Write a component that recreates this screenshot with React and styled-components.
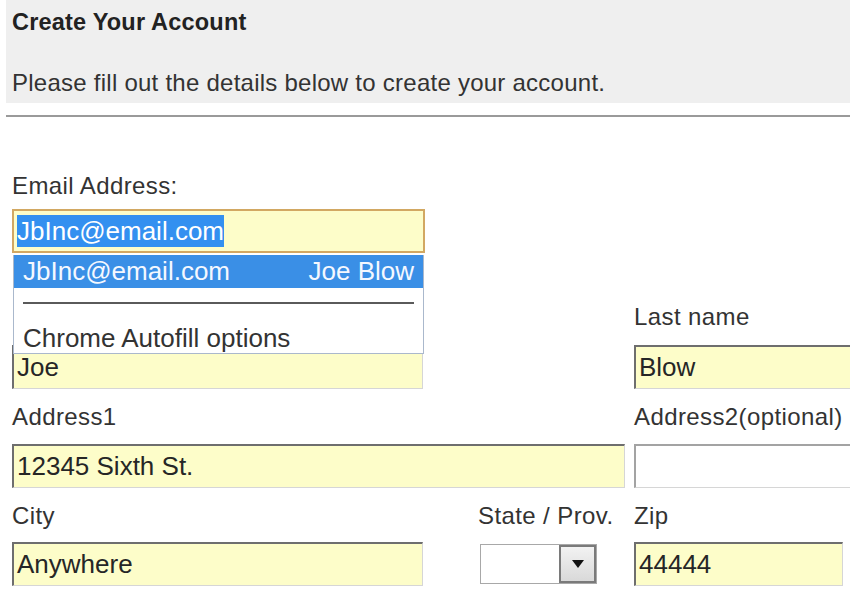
import React from 'react';
import styled, { createGlobalStyle } from 'styled-components';

const GlobalStyle = createGlobalStyle`
  html, body {
    margin: 0;
    padding: 0;
    background: #fff;
    overflow: hidden;
  }
  body {
    font-family: "Liberation Sans", Arial, sans-serif;
    color: #2b2b2b;
  }
`;

const Page = styled.div`
  width: 900px;
  padding-left: 6px;
`;

const Header = styled.div`
  background: #efefef;
  padding: 8px 6px 6px;
`;

const Title = styled.h1`
  margin: 0;
  font-size: 23.5px;
  line-height: 28px;
  font-weight: bold;
  letter-spacing: 0.2px;
  color: #222;
`;

const Subtitle = styled.p`
  margin: 33px 0 0;
  font-size: 24px;
  line-height: 28px;
  letter-spacing: 0.25px;
  color: #333;
`;

const Divider = styled.div`
  margin-top: 12px;
  height: 2px;
  background: #9a9a9a;
`;

const Form = styled.div`
  display: grid;
  grid-template-columns: 411px 211px 1fr;
  row-gap: 14px;
  padding: 55px 0 0 6px;
`;

const Field = styled.div`
  position: relative;
  display: flex;
  flex-direction: column;
  align-items: flex-start;
  grid-column: ${p => p.$span || 'auto'};
  padding-left: ${p => p.$indent || 0}px;
  margin-bottom: ${p => p.$after || 0}px;
`;

const Label = styled.label`
  font-size: 24px;
  line-height: 28px;
  letter-spacing: 0.4px;
  color: #333;
  margin-bottom: ${p => p.$gap || 13}px;
  white-space: nowrap;
  visibility: ${p => (p.$covered ? 'hidden' : 'visible')};
`;

const Input = styled.div`
  box-sizing: border-box;
  width: ${p => p.$width}px;
  height: 44px;
  display: flex;
  align-items: center;
  padding-left: 3px;
  font-size: 26px;
  color: #262626;
  white-space: nowrap;
  background: ${p => (p.$filled ? '#fdfdc9' : '#fff')};
  border-top: 2px solid ${p => (p.$filled ? '#6e6e6e' : '#a3a3a3')};
  border-left: 2px solid ${p => (p.$filled ? '#6e6e6e' : '#a3a3a3')};
  border-right: 1px solid #d6d6d6;
  border-bottom: 1px solid #d6d6d6;
`;

const FocusedInput = styled.div`
  box-sizing: border-box;
  width: 413px;
  height: 44px;
  display: flex;
  align-items: center;
  padding-left: 3px;
  font-size: 26px;
  background: #fdfdc9;
  border: 2px solid #d2a862;
`;

const Selected = styled.span`
  background: #3390f0;
  color: #fff;
  line-height: 32px;
`;

const Suggestions = styled.div`
  position: absolute;
  top: 83px;
  left: 1px;
  z-index: 2;
  box-sizing: border-box;
  width: 411px;
  background: #fff;
  border: 1px solid #aab8cc;
  border-top: none;
  font-size: 26px;
`;

const Suggestion = styled.div`
  display: flex;
  justify-content: space-between;
  height: 33px;
  align-items: center;
  padding: 0 9px;
  background: #3a8fe6;
  color: #f4f8ff;
`;

const Separator = styled.div`
  margin: 14px 9px 0;
  height: 2px;
  background: #5a5a5a;
`;

const Option = styled.div`
  padding: 20px 9px 0;
  line-height: 29px;
  color: #333;
`;

const Select = styled.div`
  box-sizing: border-box;
  margin: 2px 0 0 2px;
  width: 117px;
  height: 40px;
  display: flex;
  justify-content: flex-end;
  background: #fff;
  border: 1px solid #a8a8a8;
`;

const SelectButton = styled.div`
  box-sizing: border-box;
  width: 37px;
  height: 100%;
  display: flex;
  align-items: center;
  justify-content: center;
  background: linear-gradient(#f2f2f2, #d9d9d9);
  border: 2px solid #7a7a7a;
`;

const Arrow = () => (
  <svg width="12" height="8" viewBox="0 0 12 8">
    <path d="M0 0h12L6 8z" fill="#111" />
  </svg>
);

export default function App() {
  return (
    <Page>
      <GlobalStyle />
      <Header>
        <Title>Create Your Account</Title>
        <Subtitle>Please fill out the details below to create your account.</Subtitle>
      </Header>
      <Divider />
      <Form>
        <Field $span="1 / span 3" $after={36}>
          <Label $gap={9}>Email Address:</Label>
          <FocusedInput>
            <Selected>JbInc@email.com</Selected>
          </FocusedInput>
          <Suggestions>
            <Suggestion>
              <span>JbInc@email.com</span>
              <span>Joe Blow</span>
            </Suggestion>
            <Separator />
            <Option>Chrome Autofill options</Option>
          </Suggestions>
        </Field>

        <Field $span="1">
          <Label $gap={14} $covered>First name</Label>
          <Input $filled $width={411}>Joe</Input>
        </Field>
        <Field $span="3">
          <Label $gap={14}>Last name</Label>
          <Input $filled $width={240}>Blow</Input>
        </Field>

        <Field $span="1 / span 2">
          <Label>Address1</Label>
          <Input $filled $width={613}>12345 Sixth St.</Input>
        </Field>
        <Field $span="3">
          <Label>Address2(optional)</Label>
          <Input $width={240} />
        </Field>

        <Field $span="1">
          <Label $gap={12}>City</Label>
          <Input $filled $width={411}>Anywhere</Input>
        </Field>
        <Field $span="2" $indent={55}>
          <Label $gap={12}>State / Prov.</Label>
          <Select>
            <SelectButton>
              <Arrow />
            </SelectButton>
          </Select>
        </Field>
        <Field $span="3">
          <Label $gap={12}>Zip</Label>
          <Input $filled $width={209}>44444</Input>
        </Field>
      </Form>
    </Page>
  );
}
